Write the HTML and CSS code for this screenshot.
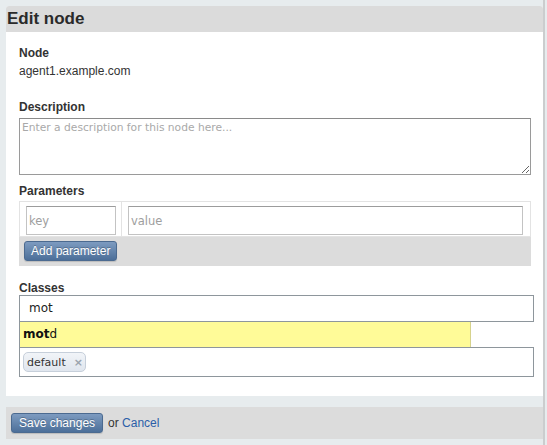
FILE: index.html
```html
<!DOCTYPE html>
<html lang="en">
<head>
<meta charset="utf-8">
<title>Edit node</title>
<link rel="stylesheet" href="styles.css">
</head>
<body>
<div class="page">
  <div class="card">
    <h1 class="card-title">Edit node</h1>
    <div class="card-body">
      <div class="field field-node">
        <div class="label label-tight">Node</div>
        <div class="node-name">agent1.example.com</div>
      </div>
      <div class="field field-desc">
        <label class="label">Description</label>
        <textarea class="desc" placeholder="Enter a description for this node here..."></textarea>
      </div>
      <div class="field field-params">
        <div class="label label-params">Parameters</div>
        <div class="params">
          <div class="param-row">
            <div class="cell cell-key"><input class="text-input input-key" placeholder="key"></div>
            <div class="cell cell-value"><input class="text-input input-value" placeholder="value"></div>
          </div>
          <div class="param-actions">
            <button class="btn">Add parameter</button>
          </div>
        </div>
      </div>
      <div class="field field-classes">
        <div class="label label-classes">Classes</div>
        <div class="token-input">mot</div>
        <div class="suggest"><b>mot</b>d</div>
        <div class="tags">
          <span class="tag">default <span class="tag-x">×</span></span>
        </div>
      </div>
    </div>
  </div>
  <div class="actions">
    <button class="btn btn-save">Save changes</button>
    <span class="or">or <a class="cancel" href="#">Cancel</a></span>
  </div>
</div>
</body>
</html>
```

FILE: styles.css
```css
html, body {
  margin: 0;
  padding: 0;
  background: #e7ecee;
}

body {
  font-family: "Liberation Sans", Arial, sans-serif;
  font-size: 12px;
  color: #333;
}

.page {
  width: 537px;
  padding: 6px 0 0 6px;
  border-right: 2px solid #cbcdce;
  min-height: 439px;
}

.card {
  background: #fff;
  border-radius: 3px 3px 0 0;
  overflow: hidden;
}

.card-title {
  margin: 0;
  height: 26px;
  padding-left: 1px;
  background: #dbdbdb;
  color: #2a2a2a;
  font: bold 17px/26px "Liberation Sans", Arial, sans-serif;
}

.card-body {
  padding: 13px 12px 19px 13px;
}

.label {
  display: block;
  font-weight: bold;
  line-height: 16px;
  margin-bottom: 3px;
  color: #333;
}

.label-tight {
  margin-bottom: 2px;
}

.label-params {
  margin-bottom: 2px;
}

.label-classes {
  margin-bottom: 0;
}

.node-name {
  line-height: 16px;
  color: #333;
}

.field-node {
  margin-bottom: 20px;
}

.field-desc {
  margin-bottom: 8px;
}

.desc {
  display: block;
  box-sizing: border-box;
  width: 512px;
  height: 57px;
  margin: 0;
  padding: 2px 2px;
  border: 1px solid #9a9a9a;
  border-top-color: #8a8a8a;
  font: 10.7px/13px "DejaVu Sans", sans-serif;
  color: #333;
}

.desc::placeholder {
  color: #a9a9a9;
}

.field-params {
  margin-bottom: 14px;
}

.params {
  width: 512px;
  background: #dcdcdc;
}

.param-row {
  display: flex;
  height: 34px;
  background: #fff;
  border: 1px solid #e3e3e3;
}

.cell {
  padding: 4px 5px 0 6px;
}

.cell-key {
  border-right: 1px solid #e3e3e3;
}

.cell-value {
  flex: 1;
  padding-right: 7px;
}

.text-input {
  box-sizing: border-box;
  height: 29px;
  margin: 0;
  padding: 0 2px;
  border: 1px solid #c3c3c3;
  border-top-color: #9c9c9c;
  font: 11.5px "DejaVu Sans", sans-serif;
  color: #333;
  background: #fff;
}

.text-input::placeholder {
  color: #9e9e9e;
}

.input-key {
  width: 90px;
}

.input-value {
  width: 100%;
}

.param-actions {
  padding: 4px 5px 5px 5px;
}

.btn {
  box-sizing: border-box;
  height: 20px;
  margin: 0;
  padding: 0 6px;
  border: 1px solid #4b6a90;
  border-radius: 3px;
  background: linear-gradient(#7d9bc0, #4c6f99);
  color: #fff;
  font: 12px/18px "Liberation Sans", Arial, sans-serif;
  text-shadow: 0 -1px 0 rgba(0, 0, 0, 0.25);
  box-shadow: 0 1px 1px rgba(0, 0, 0, 0.15);
}

.token-input {
  box-sizing: border-box;
  width: 515px;
  height: 27px;
  margin-top: -1px;
  padding-left: 9px;
  border: 1px solid #8e969c;
  font: 12px/25px "DejaVu Sans", sans-serif;
  color: #222;
}

.suggest {
  box-sizing: border-box;
  width: 452px;
  height: 25px;
  padding-left: 3px;
  background: #fffb98;
  border-left: 1px solid #8e969c;
  border-right: 1px solid #d6d28c;
  font: 12px/24px "DejaVu Sans", sans-serif;
  color: #111;
}

.suggest b {
  font-weight: bold;
}

.tags {
  box-sizing: border-box;
  width: 515px;
  height: 30px;
  padding: 4px 3px;
  border: 1px solid #8e969c;
}

.tag {
  display: inline-flex;
  align-items: center;
  box-sizing: border-box;
  height: 20px;
  width: 63px;
  padding: 0 3px;
  border: 1px solid #c6cfda;
  border-radius: 5px;
  background: linear-gradient(#f1f4f8, #e0e6ee);
  font: 11px "DejaVu Sans", sans-serif;
  color: #333;
}

.tag-x {
  margin-left: auto;
  margin-right: -1px;
  color: #9aa3ad;
  font-size: 11px;
  font-weight: bold;
}

.actions {
  display: flex;
  align-items: center;
  height: 32px;
  margin-top: 11px;
  padding: 0 5px;
  background: #dcdcdc;
}

.btn-save {
  padding: 0 7px;
}

.or {
  margin-left: 5px;
  color: #333;
}

.cancel {
  color: #2b5ea8;
  text-decoration: none;
}
```
